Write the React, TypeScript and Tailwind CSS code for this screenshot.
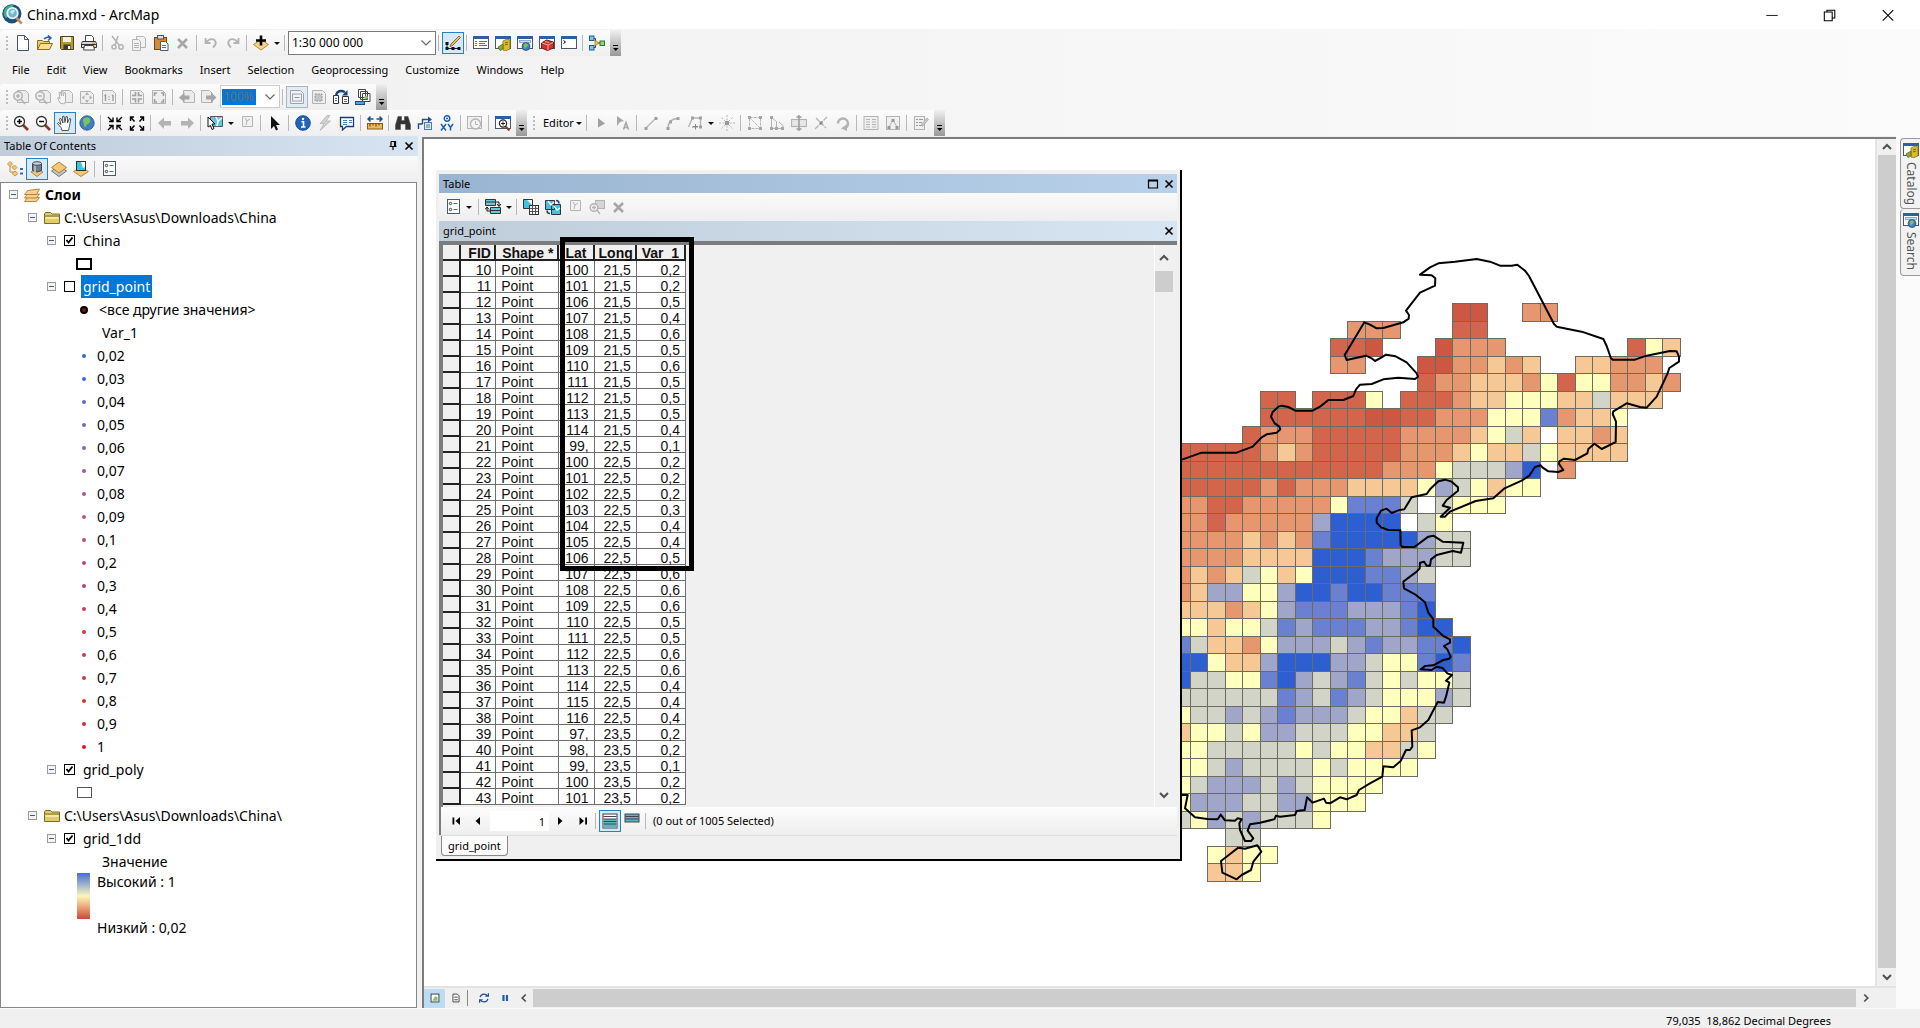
import React from "react";

const G = "#b3b3b3";
const win = (c = "#2c5fa8") => (
  <>
    <rect x="0.5" y="1.5" width="15" height="12" fill="#fff" stroke="#4a5568" />
    <rect x="0" y="1" width="16" height="3" fill={c} />
  </>
);
const page = (
  <path d="M4.5 1.5h8l3 3v9h-11z" fill="#ececec" stroke={G} />
);
const globe = (cx: number, cy: number, r: number) => (
  <>
    <circle cx={cx} cy={cy} r={r} fill="#3f7fc4" stroke="#24508a" strokeWidth="0.8" />
    <path d={`M${cx - r * 0.6} ${cy - r * 0.4}q${r * 0.5} ${-r * 0.7} ${r} ${-r * 0.2}q${r * 0.2} ${r * 0.6} ${-r * 0.4} ${r * 0.8}l${-r * 0.3} ${r * 0.5}z`} fill="#7fc15a" />
  </>
);
const sheet = (
  <>
    <rect x="2.5" y="0.5" width="12" height="14" fill="#fff" stroke="#4b5a6b" />
    <circle cx="5.5" cy="4.5" r="1.2" fill="none" stroke="#333" strokeWidth="0.9" />
    <circle cx="5.5" cy="10.5" r="1.2" fill="none" stroke="#333" strokeWidth="0.9" />
    <path d="M8.5 4.5h4M8.5 10.5h4" stroke="#3a73b8" />
  </>
);
const lens = (color: string, handle: string) => (
  <>
    <path d="M10 10l5 5" stroke={handle} strokeWidth="2.6" />
    <circle cx="6.5" cy="6.5" r="5" fill="#fff" stroke={color} strokeWidth="1.3" />
  </>
);

const ICONS: Record<string, React.ReactNode> = {
  app: (
    <>
      <circle cx="7.5" cy="7.5" r="7.3" fill="#1d4f7c" />
      <path d="M2 4q3-4 7-3l-2 3-3 2 1 3-2 2q-3-3-1-7z" fill="#3fae8b" />
      <circle cx="8" cy="7" r="4" fill="#6fb7cf" stroke="#e9f4f8" strokeWidth="1.4" />
      <path d="M6 6q2-2.500 4-1l-2 3z" fill="#bfe8df" />
      <path d="M11 10.500l4 4.500" stroke="#c98a4b" strokeWidth="2" />
    </>
  ),
  newdoc: <path d="M2.500 0.500h7l4 4v11h-11zM9.500 0.500v4h4" fill="#fdfeff" stroke="#44546a" />,
  open: (
    <>
      <path d="M0.500 14.500v-9h5l1 1h6v2" fill="#e8cf72" stroke="#8a6d1d" />
      <path d="M0.500 14.500l3-6h12l-3 6z" fill="#f7e08c" stroke="#8a6d1d" />
      <path d="M7 4q3-3 6-1M11 0.500l3 2.500-3 2.500" fill="none" stroke="#2c62a8" strokeWidth="1.500" />
    </>
  ),
  save: (
    <>
      <path d="M1.500 1.500h13v13h-12l-1-1z" fill="#b59a2a" stroke="#4a431a" />
      <rect x="4" y="2" width="8" height="5" fill="#f6f2dc" />
      <rect x="4.500" y="9.500" width="7" height="5" fill="#3d3d3d" />
      <rect x="9" y="11" width="2" height="3" fill="#fff" />
    </>
  ),
  print: (
    <>
      <path d="M4.500 6v-5.500h6l2 2v3.500" fill="#fff" stroke="#444" />
      <path d="M1.500 6.500h13l1 2v4h-15v-4z" fill="#d8d8d8" stroke="#333" />
      <path d="M3.500 10.500h9l1 4.500h-11z" fill="#fff" stroke="#444" />
      <path d="M1 9.500h14" stroke="#333" />
      <rect x="11" y="7.500" width="3" height="1.500" fill="#e2a52e" />
    </>
  ),
  cut: (
    <g fill="none" stroke={G} strokeWidth="1.500">
      <path d="M3 1l7 9M9 1l-3 9" />
      <circle cx="5" cy="12" r="2" />
      <circle cx="12" cy="12" r="2.200" />
    </g>
  ),
  copy: (
    <g fill="#f1f1f1" stroke={G}>
      <path d="M5.500 1.500h7l2 2v9h-9z" />
      <path d="M1.500 4.500h6l2 2v9h-8z" />
      <path d="M3 8.500h5M3 10.500h5M3 12.500h5" />
    </g>
  ),
  paste: (
    <>
      <rect x="1.500" y="2.500" width="12" height="12" fill="#d68b3c" stroke="#6d4a20" />
      <rect x="4.500" y="0.500" width="6" height="3.500" fill="#ddd" stroke="#555" />
      <path d="M7.500 6.500h5l2.500 2.500v6.500h-7.500z" fill="#fff" stroke="#3b5d8c" />
      <path d="M9 10.500h4M9 12.500h4" stroke="#3a73b8" />
    </>
  ),
  x: <path d="M3 4l9 9M12 4l-9 9" stroke="#a6a6a6" strokeWidth="2.600" />,
  undo: <path d="M2.500 3v5h5M3 7.500q4-5 8.500-2.500 3 3.500-1.500 7.500" fill="none" stroke={G} strokeWidth="1.800" />,
  redo: <path d="M13.500 3v5h-5M13 7.500q-4-5-8.500-2.500-3 3.500 1.500 7.500" fill="none" stroke={G} strokeWidth="1.800" />,
  add: (
    <>
      <path d="M0.500 9.500l7.500-5 7.500 5-7.500 5.500z" fill="#f3d489" stroke="#b98b33" />
      <path d="M8 0.500v10M3 5.500h10" stroke="#000" strokeWidth="2.600" />
    </>
  ),
  edit: (
    <>
      <path d="M2 8.500v5h12" fill="none" stroke="#222" />
      <path d="M0.500 7h3v3h-3zM0.500 12h3v3h-3zM6.500 12h3v3h-3zM12.500 12h3v3h-3z" fill="#111" />
      <path d="M6 9l8-8 1.500 1.500-8 8-2.500 1z" fill="#eebf55" stroke="#7a4e18" strokeWidth="0.800" />
    </>
  ),
  wtoc: (
    <>
      {win()}
      <path d="M2 6.500h2M2 8.500h2M2 10.500h2" stroke="#2f7dd1" />
      <path d="M6 6.500h8M6 8.500h6M6 10.500h8" stroke="#4a7f5f" />
    </>
  ),
  wcat: (
    <>
      {win()}
      <path d="M8 6l4-2 3 1v9l-5 2-2-1z" fill="#d9bd2c" stroke="#8b7413" strokeWidth="0.800" />
      <path d="M10 8l3-1M10 10l3-1" stroke="#7a6410" />
      <path d="M3 12l5-3v5l-3 1.500z" fill="#8fa640" stroke="#5e6d1c" strokeWidth="0.800" />
    </>
  ),
  wsearch: (
    <>
      {win()}
      <rect x="2.500" y="5.500" width="11" height="2" fill="#cfe0f2" stroke="#7d9cc0" strokeWidth="0.800" />
      {globe(9, 11.5, 4)}
    </>
  ),
  wbox: (
    <>
      {win()}
      <path d="M2.500 8l5-3 7 2v6l-6 2.500-6-2.500z" fill="#c8372f" stroke="#7d1a17" />
      <path d="M3 8l6 2 5-2.500M9 10v5M6 6.500l4 1" stroke="#f0a49c" fill="none" />
    </>
  ),
  wpy: (
    <>
      {win()}
      <path d="M2.500 5.500l2 1.500-2 1.500" fill="none" stroke="#000" />
    </>
  ),
  model: (
    <>
      <path d="M4 3.500h2.500v9H4M6.500 8h5" fill="none" stroke="#333" />
      <rect x="0.500" y="1" width="4.500" height="4.500" fill="#7cc0ec" stroke="#1f5e9e" />
      <rect x="0.500" y="10.500" width="4.500" height="4.500" fill="#7cc0ec" stroke="#1f5e9e" />
      <path d="M6 5l4 3-4 3z" fill="#f0c84a" stroke="#8a6a12" strokeWidth="0.700" />
      <rect x="11" y="6" width="4.500" height="4.500" fill="#8fd27c" stroke="#2d7a2b" />
    </>
  ),
  pzin: <>{page}<circle cx="5" cy="7" r="4.200" fill="#eee" stroke={G} strokeWidth="1.500" /><path d="M8 10l4 5M3 7h4M5 5v4" stroke={G} strokeWidth="1.600" /></>,
  pzout: <>{page}<circle cx="5" cy="7" r="4.200" fill="#eee" stroke={G} strokeWidth="1.500" /><path d="M8 10l4 5M3 7h4" stroke={G} strokeWidth="1.600" /></>,
  phand: <>{page}<path d="M3 14l-2.500-5 1.500-.500 1 1.500-1-6.500 1.500-.500 1 4V2.500l1.500 0 .300 4.500 1-3.500 1.200.300V12l-1 3z" fill="#f5f5f5" stroke={G} /></>,
  pfull: <><path d="M1.500 2.500h10l3 3v9h-13z" fill="#eee" stroke={G} /><path d="M8 3l2 3H6zM8 14l2-3H6zM2.500 8.500l3-2v4zM13.500 8.500l-3-2v4z" fill={G} /></>,
  pone: <><path d="M1.500 1.500h10l3 3v10h-13z" fill="#eee" stroke={G} /><path d="M3.500 7l1-1v6M12 6v6M11 7l1-1M8 7.500v1M8 10v1" stroke="#999" strokeWidth="1.300" fill="none" /></>,
  pin4: <><path d="M1.500 1.500h10l3 3v10h-13z" fill="#eee" stroke={G} /><path d="M3 6.500h3.500V3M3 10h3.500v3.500M13 6.500H9.500V3M13 10H9.500v3.500" stroke="#a0a0a0" strokeWidth="1.600" fill="none" /></>,
  pout4: <><path d="M1.500 1.500h10l3 3v10h-13z" fill="#eee" stroke={G} /><path d="M3.500 7V4H6M3.500 10v3H6M12.500 7V4H10M12.500 10v3H10" stroke="#a0a0a0" strokeWidth="1.600" fill="none" /></>,
  pleft: <>{page}<path d="M0 8.500l5.500-5v3h5v4h-5v3z" fill="#a6a6a6" /></>,
  pright: <><path d="M0.500 1.500h8l3 3v9h-11z" fill="#ececec" stroke={G} /><path d="M15.500 8.500l-5.500-5v3h-5v4h5v3z" fill="#a6a6a6" /></>,
  draft: <><path d="M1.500 1.500h10l3 3v10h-13z" fill="#eef1f5" stroke="#9aa5b0" /><rect x="3.500" y="5" width="9" height="7" fill="none" stroke="#9aa5b0" /><path d="M5.500 8.500h5" stroke="#8a95a0" /></>,
  focus: <><path d="M1.500 1.500h10l3 3v10h-13z" fill="#eee" stroke={G} /><rect x="4" y="5" width="7" height="7" fill="#c4c4c4" stroke="#999" strokeDasharray="2 1" /></>,
  change: (
    <>
      <path d="M3 6q2-6 9-3" fill="none" stroke="#17457a" strokeWidth="2.400" />
      <path d="M14.500 1v5.500H9z" fill="#17457a" />
      <path d="M0.500 6.500h5v8h-5zM9.500 7.500h6v7h-6z" fill="#fff" stroke="#333" />
      <path d="M2 9.500h2M2 11.500h2M11 10.500h3M11 12.500h3" stroke="#3a73b8" />
    </>
  ),
  ddp: (
    <>
      <path d="M3.500 0.500h7v8h-7zM5.500 2.500h7v8h-7zM7.500 4.500h7.500v8h-7.500z" fill="#fff" stroke="#444" />
      <circle cx="11" cy="8.500" r="1.800" fill="#8fbf6a" />
      <rect x="0.500" y="12.500" width="9" height="3" fill="#5aa0d8" stroke="#1f4e82" />
    </>
  ),
  zin: <>{lens("#333", "#8a3a2a")}<path d="M4 6.500h5M6.500 4v5" stroke="#000" strokeWidth="1.500" /></>,
  zout: <>{lens("#333", "#8a3a2a")}<path d="M4 6.500h5" stroke="#000" strokeWidth="1.500" /></>,
  hand: <path d="M5 15.500l-1-3-3.500-4 1-1 2.500 2L2.500 4l1.300-.600L6 8 5.500 1.500 7 1.200 8 7.500 9 1.500l1.400.200L10.500 8l2-4.500 1.300.500L12.500 11l-1 4.500z" fill="#fff" stroke="#444" strokeWidth="0.900" />,
  globe: globe(8, 8, 7.2),
  in4: <path d="M1 2l4.500 4.500M15 2l-4.500 4.500M1 15l4.500-4.500M15 15l-4.500-4.500M2 6.500h4v-4M14 6.500h-4v-4M2 10.500h4v4M14 10.500h-4v4" stroke="#000" strokeWidth="1.400" fill="none" />,
  out4: <path d="M1.500 2l4 4.500M14.500 2l-4 4.500M1.500 15l4-4.500M14.500 15l-4-4.500M1.500 6V2H5M14.500 6V2H11M1.500 11v4H5M14.500 11v4H11" stroke="#000" strokeWidth="1.400" fill="none" />,
  left: <path d="M1 8l6-5.500V6h7v4.500H7v3.500z" fill={G} />,
  right: <path d="M15 8L9 2.500V6H2v4.500h7v3.500z" fill={G} />,
  select: (
    <>
      <path d="M3.500 1.500h12v10h-12z" fill="#5cc6de" stroke="#555" />
      <path d="M9 2l2 4 4-3M11 6l-1 5" stroke="#fff" strokeWidth="1.500" fill="none" />
      <path d="M1 2l7 7H5l2 4.500-2 1-1.500-4L1 12z" fill="#fff" stroke="#111" />
    </>
  ),
  clear: <><path d="M3.500 1.500h10v10h-10z" fill="#f2f2f2" stroke={G} /><path d="M6 3l2 3 3-2M8 6l-1 4" stroke={G} fill="none" /></>,
  arrow: <path d="M4 1l9 9H9l2 4.500-2 1-2-4.500-3 3z" fill="#111" />,
  info: <><circle cx="8" cy="8" r="7.300" fill="#2264b8" stroke="#154a91" /><path d="M6.500 6.800h2v5M6 12h4.500" stroke="#fff" strokeWidth="1.600" fill="none" /><circle cx="8" cy="4" r="1.200" fill="#fff" /></>,
  bolt: <path d="M10 0.500L3 8.500h4l-4 7L13.500 6H9l4-5.500z" fill="#d2d2d2" stroke={G} strokeWidth="0.800" />,
  popup: <><path d="M1.500 2.500h13v9h-7l-4 3.500v-3.500h-2z" fill="#fff" stroke="#1d3f63" strokeWidth="1.300" /><path d="M4 5.500h4M4 7.500h4M4 9.500h4M10 5.500h3M10 7.500h3" stroke="#3a83c8" /></>,
  measure: <><rect x="0.500" y="8.500" width="15" height="5.500" fill="#f0b85c" stroke="#8c5a1a" /><path d="M3 8.500v3M6 8.500v2M9 8.500v3M12 8.500v2" stroke="#5c3a10" /><path d="M1 4h5.500M9.500 4H15M3.500 1.500L1 4l2.500 2.500M12.500 1.500L15 4l-2.500 2.500" stroke="#164f8f" strokeWidth="1.500" fill="none" /></>,
  find: <path d="M3 1.500h3.500v4h3v-4H13L15.500 10v4.500h-5V9h-5v5.500h-5V10z" fill="#333" stroke="#555" strokeWidth="0.600" />,
  route: <><rect x="7.500" y="7.500" width="7" height="7" fill="#d9ecf8" stroke="#4c7ba8" /><path d="M1.500 14v-5h4M5.500 9V4.500H12" fill="none" stroke="#1f4f85" strokeWidth="1.400" /><path d="M11 1.500l4 3-4 3z" fill="#1f4f85" /><path d="M9 10h4M9 12h4" stroke="#4c7ba8" /></>,
  xy: <><circle cx="8" cy="3.500" r="2.800" fill="#fff" stroke="#1f5fa8" strokeWidth="1.400" /><circle cx="8" cy="3.500" r="1" fill="#1f5fa8" /><path d="M2 9l5 6.500M7 9l-5 6.500M9 9l2.500 3.500L14 9M11.500 12v3.500" stroke="#1f5fa8" strokeWidth="1.500" fill="none" /></>,
  time: <><rect x="0.500" y="1.500" width="14" height="12" fill="#efefef" stroke={G} /><circle cx="8.500" cy="9" r="5" fill="#f4f4f4" stroke={G} strokeWidth="1.300" /><path d="M8.500 6v3.500h2.500" stroke={G} fill="none" /></>,
  viewer: <>{win()}<path d="M10 11l4.500 4.500" stroke="#8a3a2a" strokeWidth="2" /><circle cx="8" cy="8.500" r="3.600" fill="#fff" stroke="#222" strokeWidth="1.200" /><path d="M6 8.500h4M8 6.500v4" stroke="#222" /></>,
  play: <path d="M5 3l7 5.500-7 4z" fill="#a0a0a0" />,
  editA: <><path d="M2 1l7 5-4 1-3 4z" fill="#a6a6a6" /><path d="M8.500 14.500l2.500-7 2.500 7M9.500 12.500h3.500" stroke="#a6a6a6" strokeWidth="1.500" fill="none" /></>,
  line: <><path d="M3 13L13 3" stroke={G} strokeWidth="1.300" /><path d="M1.500 12h3v3h-3zM11.500 2h3v3h-3z" fill="#a0a0a0" /></>,
  curve: <><path d="M3 13q0-9 10-9.500" stroke={G} strokeWidth="1.300" fill="none" /><path d="M1.500 12h3v3h-3zM4 5.500h3v3H4zM11.500 2h3v3h-3z" fill="#a0a0a0" /></>,
  trace: <><path d="M1.500 12L5.500 3h8v9M5 12h6" stroke={G} strokeWidth="1.300" fill="none" /><path d="M12 1.500h3v3h-3zM12 10.500h3v3h-3zM4 1.500h3v3H4z" fill="#a0a0a0" /><path d="M6 11.500h5M8.500 9v5.500" stroke="#888" /></>,
  burst: <><path d="M8 0v16M0 8h16M2.500 2.500l11 11M13.500 2.500l-11 11" stroke={G} strokeDasharray="2 1.500" /><rect x="6" y="6" width="4" height="4" fill="#999" /></>,
  verts: <><path d="M2.500 2.500h11v11h-11zM2.500 2.500l11 11" stroke={G} fill="none" strokeDasharray="3 1" /><path d="M1 1h3v3H1zM12 12h3v3h-3zM1 12h3v3H1zM12 1h3v3h-3z" fill="#a6a6a6" /></>,
  reshape: <><path d="M2.500 2.500v11M2.500 2.500l5 4v7h-5M10 7l4 3.500v3H9" stroke={G} fill="none" /><path d="M1 12h3v3H1zM12 12h3v3h-3zM1 1h3v3H1zM6 12h3v3H6z" fill="#a6a6a6" /></>,
  cutp: <><rect x="0.500" y="4.500" width="15" height="7" fill="#e8e8e8" stroke={G} strokeWidth="1.200" /><path d="M8 0v16M5.500 2h5M5.500 14h5" stroke="#999" strokeWidth="1.500" /></>,
  split: <><path d="M2 14L14 2M3 3l10 10" stroke={G} strokeWidth="1.200" strokeDasharray="5 1" /><rect x="6.500" y="6.500" width="3" height="3" fill="#888" /></>,
  rotate: <><path d="M3 8.500a5 5 0 1 1 8 4" fill="none" stroke={G} strokeWidth="2.400" /><path d="M6 13.500l6-4.500v7z" fill={G} /></>,
  attrs: <><rect x="1" y="1.500" width="14" height="13" fill="#f0f0f0" stroke={G} /><path d="M3 4.500h4M3 7h4M3 9.500h4M3 12h4M9 4.500h4M9 7h4M9 9.500h4M9 12h4" stroke={G} /></>,
  sketch: <><rect x="1.500" y="1.500" width="13" height="13" fill="#f0f0f0" stroke={G} /><path d="M4 12l4-7 4 7" stroke={G} fill="none" /><path d="M2.500 11h3v3h-3zM6.500 4h3v3h-3zM10.500 11h3v3h-3z" fill="#999" /></>,
  create: <><rect x="1.500" y="1.500" width="10" height="13" fill="#f0f0f0" stroke={G} /><path d="M3 4.500h2M3 7.500h2M3 10.500h2M6 4.500h4M6 7.500h3M6 10.500h4" stroke="#999" /><path d="M8 10l6-7 1.500 1.500-6 7z" fill="#c8c8c8" stroke="#999" strokeWidth="0.600" /></>,
  lorder: <><path d="M3 3v8h4M5 6h3" stroke="#b78b3c" fill="none" /><path d="M3 0.500L5.500 3 3 5.500.500 3zM7.500 4L10 6.500 7.500 9 5 6.500zM8 10l3 2.500L8 15l-3-2.500z" fill="#f1c676" stroke="#b78b3c" strokeWidth="0.800" /><path d="M13 8h3M13 12.500h3" stroke="#2d6db5" strokeWidth="2" /></>,
  lsource: <><path d="M2 11l6-3 6 3-6 4.500z" fill="#f1c676" stroke="#b78b3c" /><path d="M3.500 2.500v7q4.500 3 9 0v-7z" fill="#6f7f92" stroke="#3d4856" /><path d="M6 4v7" stroke="#aab6c4" strokeWidth="2" /><ellipse cx="8" cy="2.500" rx="4.500" ry="1.800" fill="#c9d3de" stroke="#3d4856" /></>,
  lvis: <><path d="M0.500 10L8 5l7.500 5L8 15.500z" fill="#c4c4c4" stroke="#777" /><path d="M0.500 6.500L8 1l7.500 5.500L8 12z" fill="#f3c878" stroke="#b07f2c" /></>,
  lsel: <><path d="M0.500 10.500L8 6l7.500 4.500L8 15.500z" fill="#f1c676" stroke="#b78b3c" /><rect x="3.500" y="0.500" width="9" height="9" fill="#3fc3e0" stroke="#333" /><path d="M8 1l4 0v5l-2 1z" fill="#fff" /></>,
  sheet,
  layers: <g stroke="#b5792f" strokeWidth="0.900" fill="#f6cf93"><path d="M0.500 14.500l3-4h12l-3 4z" /><path d="M0.500 11l3-4h12l-3 4z" /><path d="M0.500 7.500l3-4L15.500 2l-3 5.500z" /></g>,
  folder: <><path d="M0.500 13.500V4l1-1.500h5L8 4h7.500v9.500z" fill="#e0cd6a" stroke="#7b6c22" /><path d="M1 6h14" stroke="#7b6c22" /><path d="M1.500 7h13v2h-13z" fill="#f3e8a6" /></>,
  related: <><path d="M0.500 0.500h10v6h-10zM5.500 8.500h10v6h-10z" fill="#6fc4d6" stroke="#333" /><path d="M1 3h9M6 11.500h9" stroke="#333" /><path d="M11 3h3v4M12 5l2 2.500L16 5M5 12H2V9M0 10.500L2 8l2 2.500" stroke="#111" fill="none" /></>,
  selattr: <><path d="M0.500 0.500h9v9h-9z" fill="#3fc3e0" stroke="#333" /><path d="M4 1h5v5z" fill="#fff" /><rect x="6.500" y="6.500" width="9" height="9" fill="#fff" stroke="#333" /><path d="M7 9.500h8M7 12.500h8M9.500 7v8M12.500 7v8" stroke="#555" /></>,
  switchsel: <><path d="M0.500 1.500h9v9h-9zM6.500 5.500h9v10h-9z" fill="#3fc3e0" stroke="#333" /><path d="M3 2l3 4 3-3M9 7l3 4 3-2" stroke="#fff" strokeWidth="1.400" fill="none" /><path d="M11 1.500q3 0 3 3M5 14.500q-3 0-3-3" stroke="#16457d" strokeWidth="1.600" fill="none" /></>,
  zoomsel: <><rect x="6.500" y="1.500" width="9" height="8" fill="#d5d5d5" stroke={G} /><circle cx="5" cy="8.500" r="3.800" fill="#f2f2f2" stroke={G} strokeWidth="1.400" /><path d="M8 11l3 4M3 8.500h4M5 6.500v4" stroke={G} strokeWidth="1.300" /></>,
  allrec: <><rect x="1" y="1" width="14" height="14" fill="#fff" stroke="#444" /><path d="M1.500 6h13v8.500h-13z" fill="#5fb3c0" /><path d="M1.500 3.500h13M1.500 6h13M1.500 8.500h13M1.500 11h13" stroke="#445" /></>,
  selrec: <><rect x="1" y="1" width="14" height="8" fill="#5fb3c0" stroke="#444" /><path d="M1.500 3.500h13M1.500 6h13" stroke="#445" /></>,
  mini: <><rect x="3.500" y="3.500" width="9" height="9" fill="#fff" stroke="#333" /><path d="M5 11l3-5 3 1v4z" fill="#8fbf6a" /></>,
  minip: <path d="M4.500 3.500h5l2 2v7h-7zM6 7h4M6 10h4" fill="#fff" stroke="#333" />,
  refresh: <path d="M3.500 7q1-3.500 4.500-3.500 2.500 0 4 2M13 2.500v3.500h-3.500M12.500 9q-1 3.500-4.500 3.500-2.500 0-4-2M3 13.500V10h3.500" fill="none" stroke="#1f4f8f" strokeWidth="1.400" />,
  pause: <path d="M5 4.500h2.500v7H5zM9 4.500h2.500v7H9z" fill="#1f5fa8" />,
  chevL: <path d="M10 4l-4 4 4 4" fill="none" stroke="#505050" strokeWidth="2" />,
  chevR: <path d="M6 4l4 4-4 4" fill="none" stroke="#505050" strokeWidth="2" />,
  chevU: <path d="M4 10l4-4 4 4" fill="none" stroke="#505050" strokeWidth="2" />,
  chevD: <path d="M4 6l4 4 4-4" fill="none" stroke="#505050" strokeWidth="2" />,
  thinD: <path d="M3.500 5.500L8 10l4.500-4.500" fill="none" stroke="#666" strokeWidth="1.200" />,
  first: <path d="M4.500 4.500h1.800v7H4.500zM12 4v8l-4.500-4z" fill="#000" />,
  prev: <path d="M10 4v8L5.500 8z" fill="#000" />,
  next: <path d="M6 4v8l4.500-4z" fill="#000" />,
  last: <path d="M11.200 4.500H13v7h-1.800zM5.500 4v8L10 8z" fill="#000" />,
  close: <path d="M4.500 4.500l7 7M11.500 4.500l-7 7" stroke="#000" strokeWidth="1.700" />,
  max: <path d="M3.500 4h9v8h-9zM3.500 5h9" fill="none" stroke="#000" strokeWidth="1.200" />,
  pin: <path d="M6 3.500h4.500v5M6 3.500v5M9.500 3.500v5M4.500 8.500h7M8 8.500V12" stroke="#000" strokeWidth="1.200" fill="none" />,
  wmin: <path d="M1.500 8.500h13" stroke="#000" />,
  wmax: <path d="M1.500 4.500h9v10h-9zM4.500 4.500v-2h9v9h-3" fill="none" stroke="#000" strokeWidth="1.200" />,
  wclose: <path d="M2 2.500l12 12M14 2.500l-12 12" stroke="#000" strokeWidth="1.200" />,
};

function Icon({ n, s = 16 }: { n: string; s?: number }) {
  return (
    <svg width={s} height={s} viewBox="0 0 16 16" className="block shrink-0" aria-hidden="true">
      {ICONS[n]}
    </svg>
  );
}

function Tool({ n, label, on }: { n: string; label: string; on?: boolean }) {
  return (
    <button
      type="button"
      aria-label={label}
      className={
        on
          ? "flex h-[22px] w-[22px] shrink-0 items-center justify-center border border-[#2a7fc9] bg-[#d5e9f9]"
          : "flex h-[22px] w-[22px] shrink-0 items-center justify-center"
      }
    >
      <Icon n={n} />
    </button>
  );
}

const Sep = () => <span className="ml-0.5 mr-[3px] h-4 w-px shrink-0 bg-[#b8b8b8]" />;
const Grip = () => <span className="ml-1.5 mr-0.5 h-3.5 w-0 shrink-0 border-l-2 border-dotted border-[#bcbcbc]" />;
const Drop = () => (
  <svg width="10" height="16" viewBox="0 0 10 16" className="shrink-0" aria-hidden="true">
    <path d="M2 7h6l-3 3z" fill="#111" />
  </svg>
);
const Overflow = () => (
  <button type="button" aria-label="Toolbar options" className="ml-0.5 flex h-[26px] w-[11px] shrink-0 items-end justify-center self-end bg-linear-to-b from-[#f0f0f0] to-[#999] pb-1">
    <svg width="7" height="7" viewBox="0 0 7 7" aria-hidden="true">
      <path d="M1 0.500h5" stroke="#000" />
      <path d="M1 3h5.500L3.700 6z" fill="#000" />
    </svg>
  </button>
);
const strip = "flex h-[26px] items-center rounded-l bg-linear-to-b from-[#fcfcfc] to-[#efefef]";

const T = (list: string[]) => list.map((s) => {
  const [n, l] = s.split(":");
  return <Tool key={n} n={n} label={l} />;
});

function Expander() {
  return (
    <svg width="9" height="9" viewBox="0 0 9 9" className="block shrink-0" aria-hidden="true">
      <rect x="0.500" y="0.500" width="8" height="8" fill="#f4f4f4" stroke="#9a9a9a" />
      <path d="M2 4.500h5" stroke="#3d5aa0" />
    </svg>
  );
}

function Check({ id, on }: { id: string; on?: boolean }) {
  return (
    <span className="relative ml-2 flex h-[11px] w-[11px] shrink-0">
      <input id={id} type="checkbox" defaultChecked={on} className="peer h-[11px] w-[11px] appearance-none border border-black bg-white" />
      <svg viewBox="0 0 11 11" className="pointer-events-none absolute inset-0 hidden h-[11px] w-[11px] peer-checked:block" aria-hidden="true">
        <path d="M2.500 5l2 2.500 4-5" fill="none" stroke="#000" strokeWidth="1.800" />
      </svg>
    </span>
  );
}

const row = "flex h-[23px] items-center";

function LayerRow({ id, on, selected }: { id: string; on?: boolean; selected?: boolean }) {
  return (
    <div className={row + " pl-[46px]"}>
      <Expander />
      <Check id={id} on={on} />
      <label
        htmlFor={id}
        className={selected ? "ml-[6px] flex h-[23px] items-center bg-[#0078d7] px-[2px] text-white" : "ml-2"}
      >
        {id}
      </label>
    </div>
  );
}

const CLASSES: [string, string][] = [
  ["0,02", "#2d66d8"], ["0,03", "#4068d8"], ["0,04", "#6068cc"], ["0,05", "#7068c4"],
  ["0,06", "#8662b4"], ["0,07", "#985cac"], ["0,08", "#a4589c"], ["0,09", "#b05490"],
  ["0,1", "#b84c80"], ["0,2", "#bc4874"], ["0,3", "#c04468"], ["0,4", "#c8405c"],
  ["0,5", "#cc3c50"], ["0,6", "#d03848"], ["0,7", "#d4343c"], ["0,8", "#d83030"],
  ["0,9", "#dc2828"], ["1", "#e01818"],
];

const REC: [string, string, string][] = [
  ["100", "21,5", "0,2"], ["101", "21,5", "0,2"], ["106", "21,5", "0,5"], ["107", "21,5", "0,4"],
  ["108", "21,5", "0,6"], ["109", "21,5", "0,5"], ["110", "21,5", "0,6"], ["111", "21,5", "0,5"],
  ["112", "21,5", "0,5"], ["113", "21,5", "0,5"], ["114", "21,5", "0,4"], ["99,", "22,5", "0,1"],
  ["100", "22,5", "0,2"], ["101", "22,5", "0,2"], ["102", "22,5", "0,2"], ["103", "22,5", "0,3"],
  ["104", "22,5", "0,4"], ["105", "22,5", "0,4"], ["106", "22,5", "0,5"], ["107", "22,5", "0,6"],
  ["108", "22,5", "0,6"], ["109", "22,5", "0,6"], ["110", "22,5", "0,5"], ["111", "22,5", "0,5"],
  ["112", "22,5", "0,6"], ["113", "22,5", "0,6"], ["114", "22,5", "0,4"], ["115", "22,5", "0,4"],
  ["116", "22,5", "0,4"], ["97,", "23,5", "0,2"], ["98,", "23,5", "0,2"], ["99,", "23,5", "0,1"],
  ["100", "23,5", "0,2"], ["101", "23,5", "0,2"],
];

const COLORS: Record<string, string> = {
  D: "#cc5843", R: "#d3654d", O: "#e6976f", P: "#f5c895", Y: "#ffffbe",
  G: "#d2d4c8", L: "#9fa6ca", B: "#6a80d0", K: "#2d5fd2",
};

const GRID = [
  "................DD..OO",
  "..........OOO...RR",
  ".........RRD...DOOO.......RYP",
  ".........OO...DDOOPOP..PPOOO",
  "..............ROOPPPOYRYYOOPO",
  ".....RR.RRRY.RRROPPYYYPPGPPP",
  ".....RRRRRRDDRROOOYYYBOPPY",
  "....ROOORRRRROOOOPYGP.PPOP",
  "RRRRROPORRRRROOOPYPPGYPPPP",
  "RRRRRRRRRRRROOOYGGGLK.O",
  "RRRRROROOOPPPPYLGYPYY",
  "OORROOOOOYBBBG.GYYY",
  "OOROOOOOLKKKK.GY",
  "OOOOPOPOBKKKKKLGG",
  "OOOOPPPPKKKBLLLGG",
  "OPOPGYPYKKKBBLG",
  "OPLLYYLKKBKKBBB",
  "PPPOPYLBBBLLLBK",
  "YYPYYGBLBBBLLBKK",
  "BGPPOYLLLGLBLLBBK",
  "KKYPPLKKKLLGYYBKB",
  "KGGYYBKLGLBGYGYYG",
  "GGGGGGBLGBLGYYYLG",
  "YGGLGLBLLLGYYPGG",
  "PYYGYLLGGGYYPPG",
  "YYGGGGGYGYYPPGY",
  "YYGLGGGGYGYYYY",
  "YGLLLGLGYYYY",
  "YLLLGGLLYYY",
  "GYLGLGGGY",
  "...GG",
  "..YPYY",
  "..PPY",
];

const COAST =
  "36,659 95,638 200,638 248,620 275,592 290,583 320,578 331,568 328,560 314,550 303,530 308,516 325,500 335,497 355,501 376,512 428,512 450,500 475,480 520,480 550,468 558,448 570,434 605,432 640,418 685,413 735,417 744,410 740,400 710,367 677,349 648,344 635,352 615,363 605,355 588,347 530,360 524,345 583,247 600,254 620,265 640,264 700,247 716,236 717,225 708,212 750,158 795,137 796,115 785,106 750,104 780,82 805,70 855,65 920,57 960,65 990,77 1025,77 1042,74 1065,92 1077,108 1152,252 1160,260 1235,275 1300,297 1310,318 1323,355 1328,359 1395,359 1430,347 1500,333 1520,334 1527,350 1527,365 1498,384 1492,402 1460,470 1430,503 1410,501 1370,490 1330,514 1328,522 1338,545 1337,606 1295,627 1273,611 1255,627 1252,640 1215,660 1182,656 1168,664 1167,672 1180,690 1165,696 1135,694 1117,682 1112,676 1095,681 1078,707 1055,722 1002,746 970,775 917,783 840,815 825,830 812,830 840,803 818,797 830,780 864,752 864,742 845,725 825,719 805,724 780,748 770,762 725,772 703,808 685,811 665,819 650,806 633,812 620,835 620,848 633,862 655,870 691,871 692,915 697,921 733,921 775,890 790,887 818,905 880,908 873,938 848,933 800,945 783,958 780,977 770,977 762,965 750,968 749,985 740,995 700,1025 702,1045 735,1063 765,1087 775,1118 790,1138 790,1160 820,1188 840,1198 840,1208 822,1218 832,1228 842,1250 838,1256 820,1260 790,1276 765,1278 752,1288 785,1290 800,1280 818,1284 832,1300 846,1305 828,1322 838,1328 828,1370 822,1388 803,1386 775,1440 750,1462 725,1471 727,1520 720,1530 708,1530 692,1563 670,1582 640,1579 637,1610 600,1630 567,1650 560,1665 530,1678 510,1672 480,1690 468,1688 462,1676 428,1688 411,1672 404,1710 380,1713 375,1725 330,1730 318,1727 313,1738 270,1748 240,1753 233,1772 250,1795 243,1803 225,1803 210,1770 208,1750 215,1738 203,1735 195,1742 165,1741 152,1724 143,1738 112,1737 75,1732 45,1705 53,1665 36,1665";
const HAINAN =
  "205,1823 225,1826 262,1816 274,1835 250,1865 243,1890 215,1905 200,1918 157,1898 153,1863 185,1838 205,1823";

function MapDrawing() {
  const cx = (c: number) => (c === 0 ? 2 : Math.floor(20 + 17.5 * (c - 1)));
  const cy = (r: number) => Math.floor(63.5 + 17.5 * r);
  return (
    <svg width="520" height="660" viewBox="0 0 520 660" className="absolute left-[746px] top-[101px]" role="img" aria-label="Map of China with gridded values">
      <g stroke="#6b6b62" strokeWidth="1">
        {GRID.flatMap((line, r) =>
          line.split("").map((ch, c) =>
            ch === "." ? null : (
              <rect key={r + "-" + c} x={cx(c) + 0.5} y={cy(r) + 0.5} width={cx(c + 1) - cx(c)} height={cy(r + 1) - cy(r)} fill={COLORS[ch]} />
            ),
          ),
        )}
      </g>
      <g transform="scale(0.333333)" fill="none" stroke="#000" strokeWidth="6" strokeLinejoin="round">
        <polyline points={COAST} />
        <polyline points={HAINAN} />
      </g>
    </svg>
  );
}

const td = "border-b border-r border-[#6e6e6e] bg-white p-0 pt-1 leading-[11px]";
const th = "border-b-2 border-r-2 border-[#222] bg-[#f0f0f0] p-0 pt-0.5 text-center font-bold leading-[12px] whitespace-nowrap";

function TableWindow() {
  return (
    <section aria-label="Table" className="absolute left-3 top-[31px] flex h-[691px] w-[746px] flex-col border-b-2 border-r-2 border-black bg-[#f0f0f0] px-[3px] pt-1">
      <header className="flex h-[19px] shrink-0 items-center bg-linear-to-r from-[#99b4d1] to-[#b9d1ea] pl-1">
        <h2 className="flex-1">Table</h2>
        <button type="button" aria-label="Maximize table"><Icon n="max" /></button>
        <button type="button" aria-label="Close table"><Icon n="close" /></button>
      </header>
      <div className="flex h-7 shrink-0 items-center bg-linear-to-b from-[#fafafa] to-[#eee] pl-[3px]">
        <Tool n="sheet" label="Table options" /><Drop /><span className="w-0.5" /><Sep />
        <Tool n="related" label="Related tables" /><Drop /><Sep />
        {T(["selattr:Select by attributes", "switchsel:Switch selection", "clear:Clear selection", "zoomsel:Zoom to selected", "x:Delete selected"])}
      </div>
      <div className="flex h-5 shrink-0 items-center bg-linear-to-r from-[#bfcddb] to-[#d7e4f2] pl-1">
        <h3 className="flex-1">grid_point</h3>
        <button type="button" aria-label="Close grid_point"><Icon n="close" /></button>
      </div>
      <div className="flex min-h-0 flex-1 overflow-hidden border-l-4 border-t-4 border-[#7c7c7c]">
        <div className="min-w-0 flex-1 overflow-hidden">
          <table className="w-[243px] table-fixed border-separate border-spacing-0 font-['Liberation_Sans',Arial,sans-serif] text-[14px] text-[#111]">
            <colgroup>
              <col className="w-[18px]" />
              <col className="w-[35px]" />
              <col className="w-[63px]" />
              <col className="w-[35px]" />
              <col className="w-[42px]" />
              <col className="w-[49px]" />
            </colgroup>
            <thead>
              <tr className="h-4">
                <th className={th} aria-label="Row selector" />
                <th scope="col" className={th + " pl-1"}>FID</th>
                <th scope="col" className={th + " pl-0.5"}>Shape *</th>
                <th scope="col" className={th}>Lat</th>
                <th scope="col" className={th + " pl-0.5"}>Long</th>
                <th scope="col" className={th}>Var_1</th>
              </tr>
            </thead>
            <tbody>
              {REC.map(([lat, long, v], i) => (
                <tr key={i} className="h-4">
                  <td className="border-b-2 border-r-2 border-[#222] bg-[#f0f0f0] p-0" />
                  <td className={td + " pr-1 text-right"}>{i + 10}</td>
                  <td className={td + " pl-[5px]"}>Point</td>
                  <td className={td + " pr-[5px] text-right"}>{lat}</td>
                  <td className={td + " pr-[5px] text-right"}>{long}</td>
                  <td className={td + " pr-[5px] text-right"}>{v}</td>
                </tr>
              ))}
            </tbody>
          </table>
        </div>
        <div className="mr-1 flex w-[19px] shrink-0 flex-col items-center border-l border-[#fff] bg-[#f0f0f0]">
          <button type="button" aria-label="Scroll up" className="flex h-[26px] items-center"><Icon n="chevU" /></button>
          <div className="h-[21px] w-full bg-[#cdcdcd]" />
          <span className="flex-1" />
          <button type="button" aria-label="Scroll down" className="flex h-6 items-center"><Icon n="chevD" /></button>
        </div>
      </div>
      <div className="flex h-7 shrink-0 items-center border-l-2 border-[#7c7c7c] bg-linear-to-b from-[#fdfdfd] to-[#eee] pl-1">
        {T(["first:First record", "prev:Previous record"])}
        <input aria-label="Record number" defaultValue="1" className="ml-px h-5 w-[59px] bg-white pr-1 text-right" />
        {T(["next:Next record", "last:Last record"])}
        <Sep />
        <Tool n="allrec" label="Show all records" on />
        <Tool n="selrec" label="Show selected records" />
        <Sep />
        <p className="pl-1">(0 out of 1005 Selected)</p>
      </div>
      <div className="flex h-6 shrink-0 border-t border-[#ddd] pl-0.5">
        <button type="button" className="h-5 rounded-b border border-t-0 border-[#888] bg-[#fbfbfb] px-[6px] leading-[18px]">grid_point</button>
      </div>
      <div className="pointer-events-none absolute left-[124px] top-[67px] h-[334px] w-[134px] border-[5px] border-black" />
    </section>
  );
}

export default function App() {
  return (
    <div className="flex h-screen min-h-[900px] flex-col bg-[#f0f0f0] font-['Noto_Sans','Segoe_UI',sans-serif] text-[11px] leading-4 text-black">
      <header className="flex h-[29px] shrink-0 items-center bg-white pl-0.5">
        <Icon n="app" s={21} />
        <h1 className="ml-1 flex-1 text-[14px]">China.mxd - ArcMap</h1>
        <button type="button" aria-label="Minimize" className="flex w-[58px] justify-center"><Icon n="wmin" s={14} /></button>
        <button type="button" aria-label="Restore" className="flex w-[58px] justify-center"><Icon n="wmax" s={14} /></button>
        <button type="button" aria-label="Close" className="mr-[3px] flex w-[58px] justify-center"><Icon n="wclose" s={14} /></button>
      </header>

      <div className="flex shrink-0 flex-col bg-linear-to-r from-[#f0f0f0] to-[#fbfbfb]">
        <div className="flex h-7 items-center">
          <div className={strip}>
            <Grip />
            <span className="w-0.5" />
            {T(["newdoc:New", "open:Open", "save:Save", "print:Print"])}
            <Sep />
            {T(["cut:Cut", "copy:Copy", "paste:Paste", "x:Delete"])}
            <Sep />
            {T(["undo:Undo", "redo:Redo"])}
            <Sep />
            <Tool n="add" label="Add data" /><Drop /><Sep />
            <span className="relative flex h-6 w-[148px] items-center">
              <select aria-label="Map scale" className="h-6 w-full appearance-none border border-[#7a7a7a] bg-white pl-[3px] text-[12px]">
                <option>1:30 000 000</option>
              </select>
              <span className="pointer-events-none absolute right-0.5"><Icon n="thinD" /></span>
            </span>
            <Sep />
            <Tool n="edit" label="Editor toolbar" on />
            <Sep />
            {T(["wtoc:Table of contents", "wcat:Catalog window", "wsearch:Search window", "wbox:ArcToolbox", "wpy:Python"])}
            <Sep />
            <Tool n="model" label="ModelBuilder" />
            <Overflow />
          </div>
        </div>

        <nav aria-label="Main menu" className="flex h-[26px] items-center gap-[17px] pl-3">
          {["File", "Edit", "View", "Bookmarks", "Insert", "Selection", "Geoprocessing", "Customize", "Windows", "Help"].map((m) => (
            <button key={m} type="button">{m}</button>
          ))}
        </nav>

        <div className="flex h-[27px] items-center">
          <div className={strip}>
            <Grip />
            {T(["pzin:Page zoom in", "pzout:Page zoom out", "phand:Page pan", "pfull:Whole page", "pone:Actual size"])}
            <Sep />
            {T(["pin4:Fixed page zoom in", "pout4:Fixed page zoom out"])}
            <Sep />
            {T(["pleft:Previous page extent", "pright:Next page extent"])}
            <span className="flex h-[23px] w-[60px] items-center justify-between border border-[#ccc] bg-white px-px">
              <input aria-label="Page zoom" defaultValue="100%" className="h-4 w-[34px] bg-[#0078d7] pl-px text-[12px] text-[#6d6d6d]" />
              <Icon n="thinD" />
            </span>
            <Sep />
            <button type="button" aria-label="Draft mode" className="flex h-[22px] w-[22px] items-center justify-center border border-[#a5b6c6] bg-[#e4ebf1]"><Icon n="draft" /></button>
            {T(["focus:Focus data frame", "change:Change layout", "ddp:Data driven pages"])}
            <Overflow />
          </div>
        </div>

        <div className="flex h-[26px] items-center">
          <div className={strip}>
            <Grip />
            {T(["zin:Zoom in", "zout:Zoom out"])}
            <Tool n="hand" label="Pan" on />
            <Tool n="globe" label="Full extent" />
            <Sep />
            {T(["in4:Fixed zoom in", "out4:Fixed zoom out"])}
            <Sep />
            {T(["left:Back", "right:Forward"])}
            <Sep />
            <Tool n="select" label="Select features" /><Drop />
            <Tool n="clear" label="Clear selected" />
            <Sep />
            <Tool n="arrow" label="Select elements" />
            <Sep />
            {T(["info:Identify", "bolt:Hyperlink", "popup:HTML popup"])}
            <Sep />
            <Tool n="measure" label="Measure" />
            <Sep />
            {T(["find:Find", "route:Find route", "xy:Go to XY"])}
            <Sep />
            <Tool n="time" label="Time slider" />
            <Sep />
            <Tool n="viewer" label="Viewer window" />
            <Overflow />
          </div>
          <div className={strip}>
            <Grip />
            <button type="button" className="ml-1.5 flex items-center">Editor<Drop /></button>
            <Sep />
            {T(["play:Edit tool", "editA:Edit annotation"])}
            <Sep />
            {T(["line:Straight segment", "curve:Arc segment", "trace:Trace"])}
            <Drop />
            <Tool n="burst" label="Point" />
            <Sep />
            {T(["verts:Edit vertices", "reshape:Reshape", "cutp:Cut polygons", "split:Split", "rotate:Rotate"])}
            <Sep />
            {T(["attrs:Attributes", "sketch:Sketch properties"])}
            <Sep />
            <Tool n="create" label="Create features" />
            <Overflow />
          </div>
        </div>
      </div>

      <div className="flex min-h-0 flex-1">
        <aside className="flex w-[418px] shrink-0 flex-col">
          <header className="flex h-5 shrink-0 items-center bg-linear-to-r from-[#bfcddb] to-[#d7e4f2] pl-1 pr-px">
            <h2 className="flex-1">Table Of Contents</h2>
            <button type="button" aria-label="Auto hide"><Icon n="pin" /></button>
            <button type="button" aria-label="Close table of contents"><Icon n="close" /></button>
          </header>
          <div className="flex h-[26px] shrink-0 items-center bg-linear-to-b from-[#fafafa] to-[#eee] pl-1">
            <Tool n="lorder" label="List by drawing order" />
            <Tool n="lsource" label="List by source" on />
            <Tool n="lvis" label="List by visibility" />
            <Tool n="lsel" label="List by selection" />
            <Sep />
            <Tool n="sheet" label="Options" />
          </div>
          <div className="mr-px min-h-0 flex-1 border border-[#828790] bg-white text-[14px]">
            <div className={row + " pl-2 font-bold"}>
              <Expander /><span className="w-1.5" /><Icon n="layers" /><span className="ml-[5px]">Слои</span>
            </div>
            <div className={row + " pl-[27px]"}>
              <Expander /><span className="w-[7px]" /><Icon n="folder" /><span className="ml-1">C:\Users\Asus\Downloads\China</span>
            </div>
            <LayerRow id="China" on />
            <div className={row + " pl-[75px]"}><span className="h-3 w-4 border-2 border-black" /></div>
            <LayerRow id="grid_point" selected />
            <div className={row + " pl-[79px]"}>
              <span className="h-2 w-2 rounded-full border-2 border-black bg-[#7a1a08]" />
              <span className="ml-[11px]">&lt;все другие значения&gt;</span>
            </div>
            <div className={row + " pl-[101px]"}>Var_1</div>
            {CLASSES.map(([label, color]) => (
              <div key={label} className={row + " pl-[81px]"}>
                <svg width="4" height="4" viewBox="0 0 4 4" aria-hidden="true"><circle cx="2" cy="2" r="2" fill={color} /></svg>
                <span className="ml-[11px]">{label}</span>
              </div>
            ))}
            <LayerRow id="grid_poly" on />
            <div className={row + " pl-[76px]"}><span className="h-[11px] w-[15px] border border-[#555]" /></div>
            <div className={row + " pl-[27px]"}>
              <Expander /><span className="w-[7px]" /><Icon n="folder" /><span className="ml-1">C:\Users\Asus\Downloads\China\</span>
            </div>
            <LayerRow id="grid_1dd" on />
            <div className={row + " pl-[101px]"}>Значение</div>
            <div className="flex pl-[76px]">
              <div className="h-[46px] w-[13px] bg-linear-to-b from-[#4a6bd0] via-[#fdf6b8] to-[#c9463a]" />
              <div className="ml-[7px] flex flex-col">
                <span className="h-[46px] leading-[18px]">Высокий : 1</span>
                <span className="leading-[18px]">Низкий : 0,02</span>
              </div>
            </div>
          </div>
        </aside>

        <main className="ml-1 mt-px flex min-w-0 flex-1 flex-col border-l-2 border-t-2 border-[#7c7c7c] bg-[#f0f0f0]">
          <div className="flex min-h-0 flex-1">
            <div className="relative min-w-0 flex-1 overflow-hidden bg-white">
              <MapDrawing />
              <TableWindow />
            </div>
            <div className="flex w-[21px] shrink-0 flex-col items-center border-l-2 border-[#e3e3e3]">
              <button type="button" aria-label="Map scroll up" className="flex h-4 items-center"><Icon n="chevU" /></button>
              <div className="w-[18px] flex-1 bg-[#cdcdcd]" />
              <button type="button" aria-label="Map scroll down" className="flex h-[18px] items-center"><Icon n="chevD" /></button>
            </div>
          </div>
          <div className="flex h-[22px] shrink-0 items-center border-t-2 border-[#e3e3e3]">
            <button type="button" aria-label="Data view" className="flex h-[19px] w-[21px] items-center justify-center bg-[#bcdcf4]"><Icon n="mini" s={14} /></button>
            <button type="button" aria-label="Layout view" className="flex h-[19px] w-[21px] items-center justify-center"><Icon n="minip" s={14} /></button>
            <span className="ml-px mr-[5px] h-4 w-px bg-[#888]" />
            <button type="button" aria-label="Refresh" className="flex w-[22px] justify-center"><Icon n="refresh" s={14} /></button>
            <button type="button" aria-label="Pause drawing" className="flex w-5 justify-center"><Icon n="pause" s={14} /></button>
            <button type="button" aria-label="Map scroll left" className="flex w-[18px] justify-center"><Icon n="chevL" s={14} /></button>
            <div className="h-[18px] flex-1 bg-[#cdcdcd]" />
            <button type="button" aria-label="Map scroll right" className="mr-5 flex w-5 justify-center"><Icon n="chevR" s={14} /></button>
          </div>
        </main>

        <aside aria-label="Docked windows" className="w-6 shrink-0 bg-[#fbfbfb] pl-1 pt-0.5 text-[#555]">
          <button type="button" className="flex h-[71px] w-5 flex-col items-center rounded-l border border-r-0 border-[#999] bg-[#f2f2f2] pt-[3px]">
            <Icon n="wcat" /><span className="pt-1 text-[12px] leading-4 [writing-mode:vertical-rl]">Catalog</span>
          </button>
          <button type="button" className="flex h-[67px] w-5 flex-col items-center rounded-l border border-r-0 border-t-0 border-[#999] bg-[#f2f2f2] pt-[3px]">
            <Icon n="wsearch" /><span className="pt-1 text-[12px] leading-4 [writing-mode:vertical-rl]">Search</span>
          </button>
        </aside>
      </div>

      <footer className="flex h-5 shrink-0 items-center justify-end border-t border-[#fafafa] pr-[89px] pt-1">
        <p className="whitespace-pre">79,035  18,862 Decimal Degrees</p>
      </footer>
    </div>
  );
}
